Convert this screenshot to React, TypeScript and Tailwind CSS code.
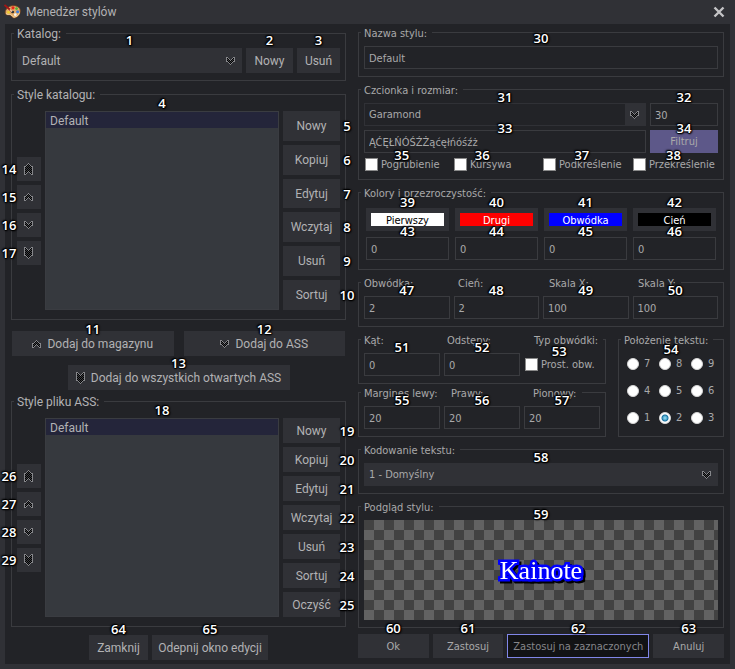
import React from "react";

type Place = "high" | "top" | "near" | "left" | "right" | "inside";

const PLACES: Record<Place, string> = {
  high: "left-1/2 -top-2 -translate-x-1/2 -translate-y-1/2",
  top: "left-1/2 -top-1.5 -translate-x-1/2 -translate-y-1/2",
  near: "left-1/2 -top-0.5 -translate-x-1/2 -translate-y-1/2",
  left: "-left-2 top-1/2 -translate-x-1/2 -translate-y-1/2",
  right: "left-[calc(100%+7px)] top-1/2 -translate-x-1/2 -translate-y-1/2",
  inside: "left-1/2 top-[18px] -translate-x-1/2 -translate-y-1/2",
};

/* Wraps a control and pins its reference number next to it. */
function Marked({ n, at = "top", className = "", children }: { n: number; at?: Place; className?: string; children: React.ReactNode }) {
  return (
    <div className={`relative ${className}`}>
      {children}
      <span
        className={`pointer-events-none absolute z-10 font-['Open_Sans','Noto_Sans',sans-serif] text-[13px] leading-4 font-semibold text-white [text-shadow:1px_0_1px_#000,-1px_0_1px_#000,0_1px_1px_#000,0_-1px_1px_#000,1px_1px_2px_#000,-1px_-1px_2px_#000] ${PLACES[at]}`}
      >
        {n}
      </span>
    </div>
  );
}

function Group({ legend, className = "", children }: { legend: React.ReactNode; className?: string; children: React.ReactNode }) {
  return (
    <fieldset className={`min-w-0 border border-[#3a3b3f] px-[5px] ${className}`}>
      <legend className="-mr-[5px] -ml-[3px] h-[17px] pr-[5px] pl-[3px] leading-[19px] whitespace-nowrap">{legend}</legend>
      {children}
    </fieldset>
  );
}

/* Builds the dithered chevron one pixel at a time: a grey rim around a black checkerboard. */
function chevronPixels(thickness: number) {
  const parts = { rim: "", dark: "", mid: "" };
  for (let x = 0; x < 9; x++) {
    const d = Math.abs(x - 4);
    const top = Math.max(0, 3 - d);
    for (let y = top; y <= top + thickness; y++) {
      const rim = y === top || y === top + thickness || d === 4;
      const key = rim ? "rim" : (x + y) % 2 ? "mid" : "dark";
      parts[key] += `M${x} ${y}h1v1h-1z`;
    }
  }
  return parts;
}

const SINGLE = chevronPixels(4);
const DOUBLE = chevronPixels(8);

function Chevron({ up = false, double = false }: { up?: boolean; double?: boolean }) {
  const h = double ? 12 : 8;
  const px = double ? DOUBLE : SINGLE;
  return (
    <svg width="10" height={h} viewBox={`0 0 10 ${h}`} shapeRendering="crispEdges" className={`shrink-0 ${up ? "-scale-y-100" : ""}`} aria-hidden="true">
      <path d={px.rim} fill="#86878b" />
      <path d={px.mid} fill="#3c3d41" />
      <path d={px.dark} fill="#000" />
    </svg>
  );
}

function Button({ className = "h-[25px]", children, label }: { className?: string; children: React.ReactNode; label?: string }) {
  return (
    <button type="button" aria-label={label} className={`flex w-full items-center justify-center bg-[#303136] whitespace-nowrap ${className}`}>
      {children}
    </button>
  );
}

const INPUT = "block h-[23px] w-full min-w-0 border border-[#3a3b3f] bg-transparent px-1 pt-0.5 outline-none";

function Field({ n, value, id, label, at }: { n: number; value: string; id?: string; label?: string; at?: Place }) {
  return (
    <Marked n={n} at={at}>
      <input id={id} aria-label={label} defaultValue={value} className={INPUT} />
    </Marked>
  );
}

function Check({ n, text, at = "near" }: { n: number; text: string; at?: Place }) {
  return (
    <Marked n={n} at={at} className="w-max">
      <label className="flex h-[15px] items-center gap-[3px] pl-px whitespace-nowrap">
        <input type="checkbox" className="size-[13px] shrink-0 appearance-none border border-[#8a8a8a] bg-white" />
        <span className="pt-0.5">{text}</span>
      </label>
    </Marked>
  );
}

function Select({ id, value, className }: { id: string; value: string; className: string }) {
  return (
    <div className="relative">
      <select id={id} className={`block w-full appearance-none bg-[#303136] px-[5px] outline-none ${className}`}>
        <option>{value}</option>
      </select>
      <span className="pointer-events-none absolute inset-y-0 right-1.5 flex items-center">
        <Chevron />
      </span>
    </div>
  );
}

function StyleLibrary({ title, list, first, arrows, actions }: { title: string; list: number; first: number; arrows: number; actions: string[] }) {
  return (
    <Group legend={title} className="pt-2 pb-[9px]">
      <div className="flex h-[199px] gap-1">
        <div className="flex w-6 flex-col justify-center gap-1">
          <Marked n={arrows} at="left"><Button className="h-6" label="Na początek"><Chevron up double /></Button></Marked>
          <Marked n={arrows + 1} at="left"><Button className="h-6" label="W górę"><Chevron up /></Button></Marked>
          <Marked n={arrows + 2} at="left"><Button className="h-6" label="W dół"><Chevron /></Button></Marked>
          <Marked n={arrows + 3} at="left"><Button className="h-6" label="Na koniec"><Chevron double /></Button></Marked>
        </div>
        <Marked n={list} at="high" className="flex-1">
          <ul role="listbox" aria-label={title} className="h-full border border-[#3a3c41] bg-[#36393e]">
            <li role="option" aria-selected="true" className="h-4 bg-[#24253a] px-1 leading-[18px]">Default</li>
          </ul>
        </Marked>
        <div className="flex w-[57px] flex-col gap-1">
          {actions.map((a, i) => (
            <Marked key={a} n={first + i} at="right" className="flex-1">
              <Button className="h-full">{a}</Button>
            </Marked>
          ))}
        </div>
      </div>
    </Group>
  );
}

const COLOURS = [
  { name: "Pierwszy", look: "bg-white text-black" },
  { name: "Drugi", look: "bg-[#ff0000] text-white" },
  { name: "Obwódka", look: "bg-[#0000ff] text-white" },
  { name: "Cień", look: "bg-black text-white" },
];

function Palette() {
  return (
    <svg width="17" height="16" viewBox="0 0 17 16" aria-hidden="true">
      <path d="M4 3.5C7 .8 13.500 1 15.600 4.300C17.600 8 15 13.300 10.500 14C8 14.300 8.200 12 6.500 11.300C4.800 10.700 2 11.700 1.300 9.300C.8 7.500 2 5 4 3.500Z" fill="#e3ab66" stroke="#7a431c" strokeWidth=".8" />
      <path d="M2 9.500C3 11 5 10 6.800 10.700C8.300 11.300 8.500 13.300 10.500 13.100C13 12.800 15 11 15.500 8.500" fill="none" stroke="#fae0b0" strokeWidth=".9" />
      <circle cx="9" cy="3.800" r="1.600" fill="#e8261c" />
      <circle cx="12.600" cy="4.600" r="1.400" fill="#4fb33a" />
      <circle cx="13.600" cy="7.800" r="1.500" fill="#3b7de0" />
      <circle cx="11.300" cy="10.700" r="1.400" fill="#f6f6f6" />
      <circle cx="4.500" cy="8.300" r="1.300" fill="#f0d22c" />
      <ellipse cx="8.600" cy="8" rx="1.500" ry="1.200" fill="#303136" />
      <path d="M.5 1L7.500 7" stroke="#a31515" strokeWidth="1.800" />
      <path d="M6 5.500L8 7.500" stroke="#f2d9b0" strokeWidth="1.500" />
    </svg>
  );
}

export default function App() {
  return (
    <div className="bg-[#303136] px-[5px] pb-[5px] font-['Roboto','Noto_Sans',sans-serif] text-xs text-[#b2b2b4]">
      <header className="flex h-6 items-center gap-[5px]">
        <span className="-ml-px"><Palette /></span>
        <h1 className="flex-1">Menedżer stylów</h1>
        <button type="button" aria-label="Zamknij okno" className="mr-[5px]">
          <svg width="12" height="12" viewBox="0 0 12 12" aria-hidden="true">
            <path d="M1.500 1.500L10.500 10.500M10.500 1.500L1.500 10.500" stroke="#c4c4c6" strokeWidth="2.400" />
          </svg>
        </button>
      </header>

      <main className="grid grid-cols-[335fr_366fr] gap-x-3 bg-[#222327] px-1.5 pb-1">
        <section className="flex min-w-0 flex-col pt-px">
          <Group legend={<label htmlFor="catalog">Katalog:</label>} className="pt-1.5 pb-[7px]">
            <div className="flex gap-1">
              <Marked n={1} at="high" className="flex-1"><Select id="catalog" value="Default" className="h-[25px]" /></Marked>
              <Marked n={2} at="high" className="w-[47px]"><Button>Nowy</Button></Marked>
              <Marked n={3} at="high" className="w-[43px]"><Button>Usuń</Button></Marked>
            </div>
          </Group>

          <div className="mt-[5px]">
            <StyleLibrary title="Style katalogu:" list={4} first={5} arrows={14} actions={["Nowy", "Kopiuj", "Edytuj", "Wczytaj", "Usuń", "Sortuj"]} />
          </div>

          <div className="mt-[11px] grid grid-cols-2 gap-2.5 px-px">
            <Marked n={11} at="near"><Button><span className="flex items-center gap-[5px]"><Chevron up />Dodaj do magazynu</span></Button></Marked>
            <Marked n={12} at="near"><Button><span className="flex items-center gap-[5px]"><Chevron />Dodaj do ASS</span></Button></Marked>
          </div>
          <Marked n={13} at="near" className="mt-[9px] w-[222px] self-center">
            <Button><span className="flex items-center gap-[5px]"><Chevron double />Dodaj do wszystkich otwartych ASS</span></Button>
          </Marked>

          <div className="mt-[3px]">
            <StyleLibrary title="Style pliku ASS:" list={18} first={19} arrows={26} actions={["Nowy", "Kopiuj", "Edytuj", "Wczytaj", "Usuń", "Sortuj", "Oczyść"]} />
          </div>

          <div className="mt-2 flex justify-center gap-1">
            <Marked n={64} className="w-[59px]"><Button>Zamknij</Button></Marked>
            <Marked n={65} className="w-[116px]"><Button>Odepnij okno edycji</Button></Marked>
          </div>
        </section>

        <section className="flex min-w-0 flex-col gap-1 font-['DejaVu_Sans_Condensed','DejaVu_Sans',sans-serif] text-[11px] text-[#a9a9aa]">
          <Group legend={<label htmlFor="name">Nazwa stylu:</label>} className="pt-[5px] pb-[7px]">
            <Field n={30} id="name" value="Default" at="high" />
          </Group>

          <Group legend="Czcionka i rozmiar:" className="pt-[5px] pb-[7px]">
            <div className="grid grid-cols-[1fr_68px] gap-1">
              <Marked n={31}>
                <div className="flex h-[23px] border border-[#303136]">
                  <input aria-label="Czcionka" defaultValue="Garamond" className="min-w-0 flex-1 bg-transparent px-1 pt-0.5 outline-none" />
                  <button type="button" aria-label="Lista czcionek" className="flex w-5 items-center justify-center bg-[#303136]"><Chevron /></button>
                </div>
              </Marked>
              <Field n={32} label="Rozmiar" value="30" />
              <Field n={33} label="Filtr znaków" value="ĄĆĘŁŃÓŚŹŻąćęłńóśźż" at="near" />
              <Marked n={34} at="near">
                <button type="button" className="block h-[23px] w-full bg-[#5d5889] pt-0.5">Filtruj</button>
              </Marked>
            </div>
            <div className="mt-1 grid grid-cols-[89px_89px_90px_1fr]">
              <Check n={35} text="Pogrubienie" />
              <Check n={36} text="Kursywa" />
              <Check n={37} text="Podkreślenie" />
              <Check n={38} text="Przekreślenie" />
            </div>
          </Group>

          <Group legend="Kolory i przezroczystość:" className="pt-[7px] pb-[9px]">
            <div className="grid grid-cols-4 gap-1.5 px-0.5">
              {COLOURS.map((c, i) => (
                <Marked key={c.name} n={39 + i}>
                  <button type="button" className="block h-[23px] w-full bg-[#303136] p-[5px]">
                    <span className={`block h-[13px] leading-[15px] ${c.look}`}>{c.name}</span>
                  </button>
                </Marked>
              ))}
              {COLOURS.map((c, i) => (
                <Field key={c.name} n={43 + i} label={`Przezroczystość: ${c.name}`} value="0" />
              ))}
            </div>
          </Group>

          <Group
            className="pt-[5px] pb-[7px]"
            legend={
              <span className="grid grid-cols-[94px_91px_89px_38px]">
                <label htmlFor="outline">Obwódka:</label>
                <label htmlFor="shadow">Cień:</label>
                <label htmlFor="scale-x">Skala X:</label>
                <label htmlFor="scale-y">Skala Y:</label>
              </span>
            }
          >
            <div className="grid grid-cols-4 gap-1">
              <Field n={47} id="outline" value="2" />
              <Field n={48} id="shadow" value="2" />
              <Field n={49} id="scale-x" value="100" />
              <Field n={50} id="scale-y" value="100" />
            </div>
          </Group>

          <div className="grid grid-cols-[248fr_106fr] gap-3">
            <div className="min-w-0">
              <Group
                className="pt-[5px] pb-[7px]"
                legend={
                  <span className="grid grid-cols-[83px_87px_64px]">
                    <label htmlFor="angle">Kąt:</label>
                    <label htmlFor="spacing">Odstępy:</label>
                    <span>Typ obwódki:</span>
                  </span>
                }
              >
                <div className="grid grid-cols-3 items-center gap-1">
                  <Field n={51} id="angle" value="0" />
                  <Field n={52} id="spacing" value="0" />
                  <Check n={53} text="Prost. obw." at="top" />
                </div>
              </Group>
              <Group
                className="pt-[5px] pb-[7px]"
                legend={
                  <span className="grid grid-cols-[87px_82px_44px]">
                    <label htmlFor="margin-left">Margines lewy:</label>
                    <label htmlFor="margin-right">Prawy:</label>
                    <label htmlFor="margin-vertical">Pionowy:</label>
                  </span>
                }
              >
                <div className="grid grid-cols-3 gap-1">
                  <Field n={55} id="margin-left" value="20" />
                  <Field n={56} id="margin-right" value="20" />
                  <Field n={57} id="margin-vertical" value="20" />
                </div>
              </Group>
            </div>
            <Marked n={54} at="inside" className="min-w-0">
              <Group legend="Położenie tekstu:" className="pt-0.5 pb-[5px]">
                <div className="grid grid-cols-[32px_32px_1fr] pl-[3px]">
                  {[7, 8, 9, 4, 5, 6, 1, 2, 3].map((p) => (
                    <label key={p} className="flex h-[27px] items-center gap-[5px]">
                      <input
                        type="radio"
                        name="position"
                        defaultChecked={p === 2}
                        className="size-3 shrink-0 appearance-none rounded-full border border-[#d5d5d5] bg-white checked:bg-[radial-gradient(circle_at_center,#a5def2_0,#4aa9d0_2px,#1b6f9c_3px,#fff_4px)]"
                      />
                      <span className="pt-0.5">{p}</span>
                    </label>
                  ))}
                </div>
              </Group>
            </Marked>
          </div>

          <Group legend={<label htmlFor="encoding">Kodowanie tekstu:</label>} className="pt-[5px] pb-[7px]">
            <Marked n={58}><Select id="encoding" value="1 - Domyślny" className="h-[23px] pt-0.5" /></Marked>
          </Group>

          <Group legend="Podgląd stylu:" className="pt-[5px] pb-[7px]">
            <Marked n={59}>
              <div className="flex h-[100px] items-center justify-center bg-[repeating-conic-gradient(#626262_0_25%,#424242_0_50%)] bg-size-[20px_20px]">
                <span className="pt-0.5 font-['Liberation_Serif',serif] text-[26px] leading-8 text-white drop-shadow-[2px_2px_0_#000] [-webkit-text-stroke:5px_#0000ff] [paint-order:stroke_fill]">Kainote</span>
              </div>
            </Marked>
          </Group>

          <div className="mt-0.5 grid grid-cols-[1fr_1fr_142px_1fr] gap-1">
            <Marked n={60}><Button className="h-6 pt-0.5">Ok</Button></Marked>
            <Marked n={61}><Button className="h-6 pt-0.5">Zastosuj</Button></Marked>
            <Marked n={62}>
              <button type="button" className="block h-6 w-full border border-[#8086e8] bg-[#121315] pt-0.5 whitespace-nowrap text-[#85868a]">Zastosuj na zaznaczonych</button>
            </Marked>
            <Marked n={63}><Button className="h-6 pt-0.5">Anuluj</Button></Marked>
          </div>
        </section>
      </main>
    </div>
  );
}
